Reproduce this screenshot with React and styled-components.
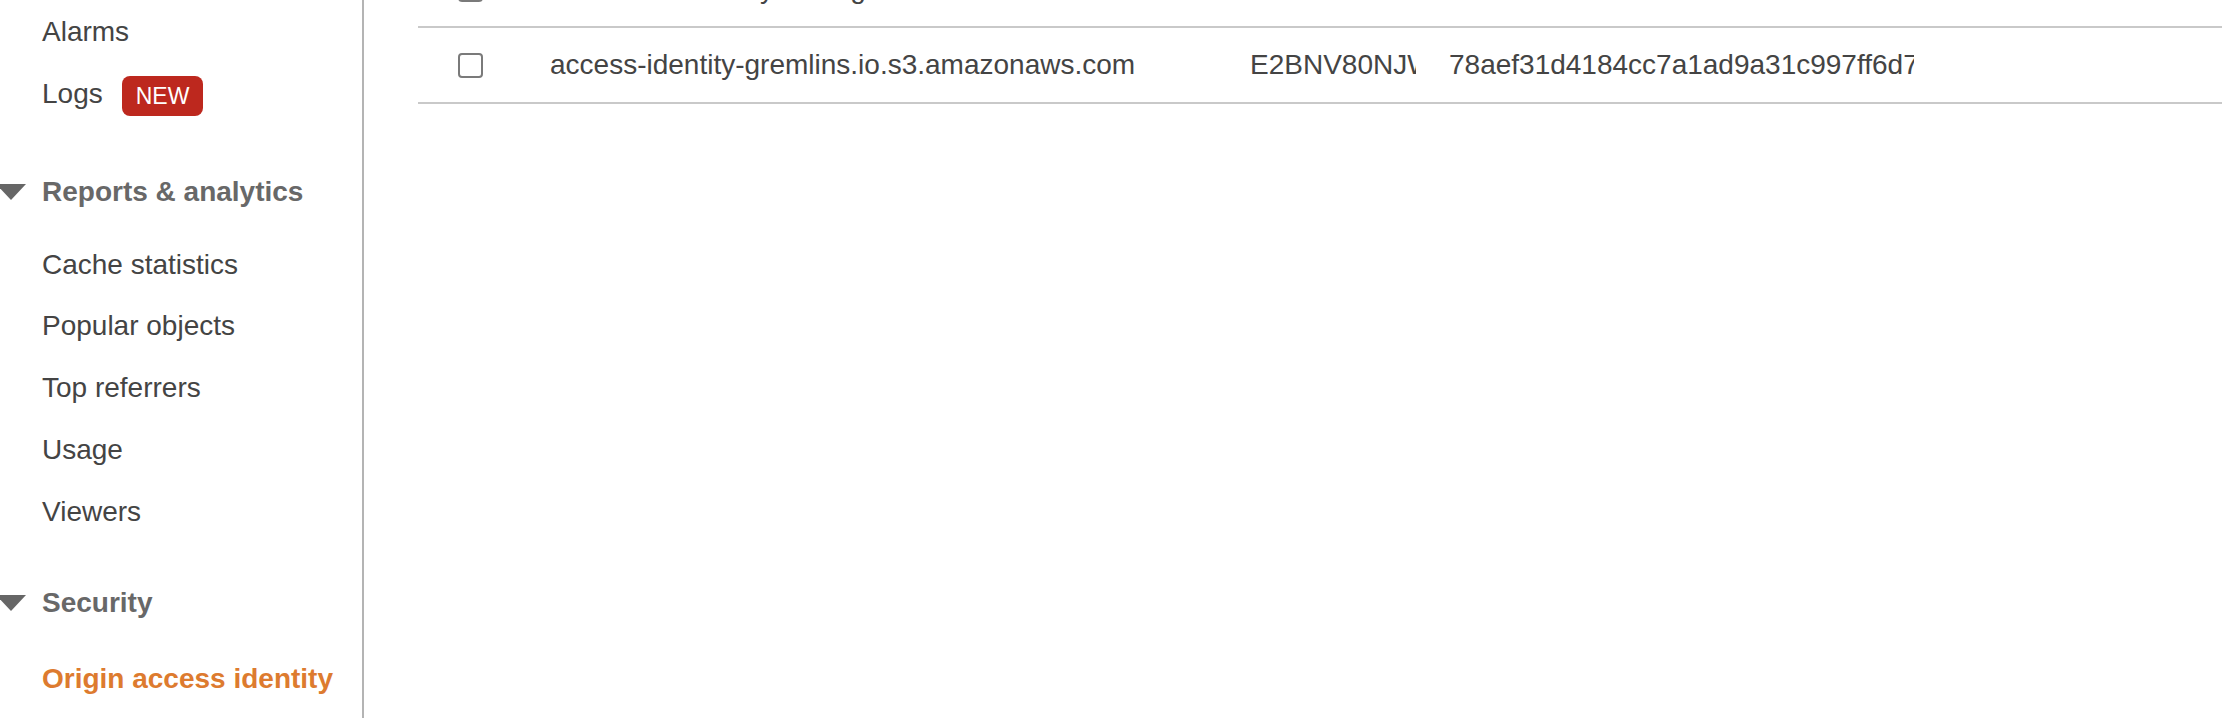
import React from "react";
import styled, { createGlobalStyle } from "styled-components";

const GlobalStyle = createGlobalStyle`
  html, body, #root {
    margin: 0;
    height: 100%;
  }
  body {
    font-family: "Liberation Sans", Arial, Helvetica, sans-serif;
    background: #fff;
    overflow: hidden;
  }
`;

export default function App() {
  const rows = [
    {
      name: "s3-access-identity-testing.s3.amazonaws.com",
      id: "E3HTMX8RN5ZKDA",
      canonical: "4c1d9e0b77a2f35e8c6d01f9ab34e7c25d8f0a16b39e4c72d15a8f60e3b9c4d7a1",
    },
    {
      name: "access-identity-gremlins.io.s3.amazonaws.com",
      id: "E2BNV80NJWQ3KX",
      canonical: "78aef31d4184cc7a1ad9a31c997ff6d7e02b5c9d41f8a6e3b7c20d95f1a4e8c6b3",
    },
  ];

  return (
    <>
      <GlobalStyle />
      <Page>
        <Sidebar>
          <NavList>
            <NavItem>Alarms</NavItem>
            <NavItem>
              Logs<Badge>NEW</Badge>
            </NavItem>
          </NavList>

          <Group $gap={36}>
            <GroupHeader>
              <Caret viewBox="0 0 30 16">
                <path d="M0 0 L30 0 L15 16 Z" fill="#666" />
              </Caret>
              Reports &amp; analytics
            </GroupHeader>
            <NavList $top={11}>
              <NavItem>Cache statistics</NavItem>
              <NavItem>Popular objects</NavItem>
              <NavItem>Top referrers</NavItem>
              <NavItem>Usage</NavItem>
              <NavItem>Viewers</NavItem>
            </NavList>
          </Group>

          <Group $gap={29}>
            <GroupHeader>
              <Caret viewBox="0 0 30 16">
                <path d="M0 0 L30 0 L15 16 Z" fill="#666" />
              </Caret>
              Security
            </GroupHeader>
            <NavList $top={14}>
              <NavItem $active>Origin access identity</NavItem>
            </NavList>
          </Group>
        </Sidebar>

        <Main>
          <Table>
            {rows.map((row) => (
              <Row key={row.id}>
                <CheckCell>
                  <Checkbox />
                </CheckCell>
                <Cell>
                  <CellText>{row.name}</CellText>
                </Cell>
                <Cell $right={13}>
                  <CellText>{row.id}</CellText>
                </Cell>
                <Cell $right={24}>
                  <CellText>{row.canonical}</CellText>
                </Cell>
                <Cell />
              </Row>
            ))}
          </Table>
        </Main>
      </Page>
    </>
  );
}

const Page = styled.div`
  display: flex;
  height: 100vh;
  overflow: hidden;
`;

const Sidebar = styled.nav`
  flex: 0 0 362px;
  border-right: 2px solid #b4b4b4;
  padding-top: 1px;
  overflow: hidden;
`;

const NavList = styled.ul`
  list-style: none;
  margin: ${(p) => p.$top || 0}px 0 0;
  padding: 0;
`;

const NavItem = styled.li`
  height: 61.8px;
  line-height: 61.8px;
  padding-left: 42px;
  font-size: 28px;
  white-space: nowrap;
  color: ${(p) => (p.$active ? "#dd7b2f" : "#444")};
  font-weight: ${(p) => (p.$active ? 700 : 400)};
`;

const Badge = styled.span`
  display: inline-block;
  margin-left: 19px;
  padding: 0 14px;
  height: 40px;
  line-height: 40px;
  border-radius: 8px;
  background: #bd281e;
  color: #fff;
  font-size: 23px;
  vertical-align: baseline;
  position: relative;
  top: 1px;
`;

const Group = styled.section`
  margin-top: ${(p) => p.$gap}px;
`;

const GroupHeader = styled.h3`
  display: flex;
  align-items: center;
  gap: 16px;
  height: 62px;
  margin: 0;
  font-size: 28px;
  font-weight: 700;
  color: #686868;
  white-space: nowrap;
`;

const Caret = styled.svg`
  flex: 0 0 30px;
  width: 30px;
  height: 16px;
  margin-left: -4px;
`;

const Main = styled.main`
  flex: 1;
  min-width: 0;
  padding-left: 54px;
  overflow: hidden;
`;

const Table = styled.div`
  margin-top: -48px;
`;

const Row = styled.div`
  display: grid;
  grid-template-columns: 112px 700px 199px 509px 1fr;
  align-items: center;
  height: 74px;
  border-bottom: 2px solid #c9c9c9;
  font-size: 28px;
  color: #444;
`;

const CheckCell = styled.div`
  display: flex;
  align-items: center;
  padding-left: 40px;
`;

const Checkbox = styled.span`
  display: block;
  box-sizing: border-box;
  width: 25px;
  height: 25px;
  border: 2px solid #7a7a7a;
  border-radius: 4px;
  background: #fff;
`;

const Cell = styled.div`
  min-width: 0;
  padding: 0 ${(p) => p.$right || 20}px 0 20px;
`;

const CellText = styled.span`
  display: block;
  overflow: hidden;
  white-space: nowrap;
`;
